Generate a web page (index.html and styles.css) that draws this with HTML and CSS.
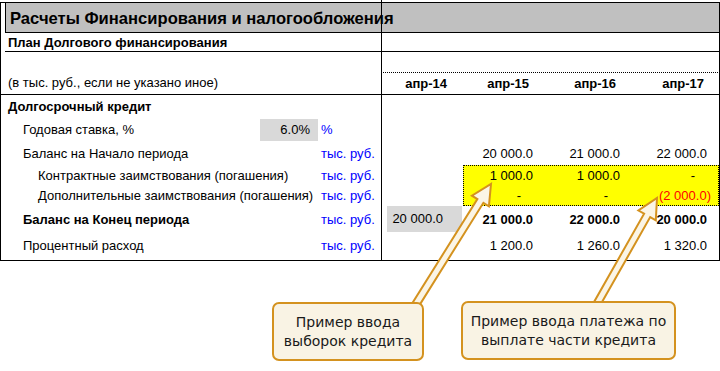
FILE: index.html
```
<!DOCTYPE html>
<html lang="ru">
<head>
<meta charset="utf-8">
<title>Расчеты Финансирования и налогообложения</title>
<link rel="stylesheet" href="styles.css">
</head>
<body>
<div class="sheet">
  <div class="frame">
    <div class="title">Расчеты Финансирования и налогообложения</div>
    <div class="plan">План Долгового финансирования</div>
    <div class="head">
      <div class="note">(в тыс. руб., если не указано иное)</div>
      <div class="gapcol"></div>
      <div class="periods">
        <div class="per per1">апр-14</div>
        <div class="per per2">апр-15</div>
        <div class="per per3">апр-16</div>
        <div class="per per4">апр-17</div>
      </div>
    </div>
    <div class="data">
      <div class="yellow">
        <div class="v">1 000.0</div>
        <div class="v">1 000.0</div>
        <div class="v dash">-</div>
        <div class="v dash">-</div>
        <div class="v dash">-</div>
        <div class="v neg">(2 000.0)</div>
      </div>

      <div class="lbl bold l0">Долгосрочный кредит</div>
      <div></div><div></div><div></div><div></div><div></div><div></div><div></div>

      <div class="lbl l1">Годовая ставка, %</div>
      <div class="input">6.0%</div>
      <div class="unit">%</div>
      <div></div><div></div><div></div><div></div><div></div>

      <div class="lbl l1">Баланс на Начало периода</div>
      <div></div>
      <div class="unit">тыс. руб.</div>
      <div></div><div></div>
      <div class="v">20 000.0</div>
      <div class="v">21 000.0</div>
      <div class="v">22 000.0</div>

      <div class="lbl l2">Контрактные заимствования (погашения)</div>
      <div></div>
      <div class="unit">тыс. руб.</div>
      <div></div><div></div>

      <div class="lbl l2">Дополнительные заимствования (погашения)</div>
      <div></div>
      <div class="unit">тыс. руб.</div>
      <div></div><div></div>

      <div class="lbl bold l1">Баланс на Конец периода</div>
      <div></div>
      <div class="unit">тыс. руб.</div>
      <div></div>
      <div class="start">20 000.0</div>
      <div class="v bold">21 000.0</div>
      <div class="v bold">22 000.0</div>
      <div class="v bold">20 000.0</div>

      <div class="lbl l1">Процентный расход</div>
      <div></div>
      <div class="unit">тыс. руб.</div>
      <div></div><div></div>
      <div class="v">1 200.0</div>
      <div class="v">1 260.0</div>
      <div class="v">1 320.0</div>
    </div>
  </div>

  <div class="freeze"></div>

  <svg class="arrows" width="720" height="371" viewBox="0 0 720 371">
    <polygon points="409.2,321.6 483.4,202.8 488.9,206.3 491,184 471.9,195.7 477.4,199.1 403.2,317.8"/>
    <polygon points="593.5,317.1 650.2,217.1 655.8,220.3 657,198 638.4,210.5 644.1,213.7 587.4,313.7"/>
  </svg>

  <div class="callout call1">Пример ввода<br>выборок кредита</div>
  <div class="callout call2">Пример ввода платежа по<br>выплате части кредита</div>
</div>
</body>
</html>
```

FILE: styles.css
```
* { box-sizing: border-box; }
html, body { margin: 0; padding: 0; background: #fff; }
body {
  font-family: "Liberation Sans", Arial, sans-serif;
  font-size: 13px;
  color: #000;
}
.sheet {
  position: relative;
  width: 720px;
  height: 371px;
  overflow: hidden;
}
.frame {
  margin-top: 2px;
  width: 720px;
  height: 259px;
  border: 1px solid #000;
}
.title {
  margin-left: 4px;
  height: 31px;
  margin-top: -1px;
  border-top: 1px solid #000;
  border-left: 1px solid #000;
  border-bottom: 1px solid #000;
  background: #c0c0c0;
  font-weight: bold;
  font-size: 16.6px;
  line-height: 29px;
  padding-top: 1px;
  padding-left: 4px;
  white-space: nowrap;
}
.plan {
  margin-left: 4px;
  height: 19px;
  border-bottom: 1px solid #000;
  font-weight: bold;
  line-height: 19px;
  padding-left: 3px;
}
.head {
  display: grid;
  grid-template-columns: 380px 1px 337px;
  height: 43px;
  border-bottom: 1px solid #000;
}
.note {
  padding-left: 7px;
  padding-top: 23px;
  line-height: 15px;
  white-space: nowrap;
}
.periods {
  display: grid;
  grid-template-columns: 81px 82px 87px 87px;
  margin-top: 20px;
  border-top: 1px dotted #000;
  margin-left: 1px;
  margin-right: 1px;
}
.per {
  font-weight: bold;
  text-align: right;
  padding-right: 17px;
  line-height: 21px;
}
.per1 { margin-left: -1px; }
.per4 { margin-right: -1px; }

.data {
  display: grid;
  grid-template-columns: 259px 58px 63px 1px 81px 82px 87px 87px;
  grid-template-rows: 23px 23px 24px 20px 21px 26px 27px;
  align-items: center;
}
.data > div { min-width: 0; }
.lbl {
  white-space: nowrap;
  overflow: visible;
}
.l0 { padding-left: 7px; }
.l1 { padding-left: 22px; }
.l2 { padding-left: 37px; }
.bold { font-weight: bold; }
.input {
  align-self: stretch;
  margin-top: 1px;
  background: #d9d9d9;
  text-align: right;
  padding-right: 8px;
  line-height: 22px;
}
.unit {
  color: #0000ff;
  padding-left: 3px;
  white-space: nowrap;
}
.v {
  text-align: right;
  padding-right: 12px;
  white-space: nowrap;
}
.v.dash { padding-right: 24px; }
.v.neg { color: #ff0000; padding-right: 8px; }
.start {
  align-self: stretch;
  margin: 0 1px 0 5px;
  background: #d9d9d9;
  text-align: right;
  padding-right: 19px;
  line-height: 26px;
  white-space: nowrap;
}
.yellow {
  grid-column: 6 / 9;
  grid-row: 4 / 6;
  align-self: stretch;
  background: #ffff00;
  border: 1px dotted #000;
  display: grid;
  grid-template-columns: 81px 87px 86px;
  grid-template-rows: 19px 20px;
  align-items: center;
}
.yellow .v:nth-child(3n) { padding-right: 11px; }
.yellow .v.dash:nth-child(3n) { padding-right: 23px; }
.yellow .v.neg { padding-right: 7px; }

.freeze {
  position: absolute;
  left: 381px;
  top: 0;
  width: 1px;
  height: 261px;
  background: #000;
}
.arrows {
  position: absolute;
  left: 0;
  top: 0;
}
.arrows polygon {
  fill: #fbf5e6;
  stroke: #d4921f;
  stroke-width: 2;
  stroke-linejoin: miter;
}
.callout {
  position: absolute;
  background: #f9f3e4;
  border: 2px solid #d4921f;
  border-radius: 7px;
  font-family: "DejaVu Sans", Verdana, sans-serif;
  font-size: 14px;
  line-height: 19px;
  color: #1a1a1a;
  text-align: center;
  display: flex;
  align-items: center;
  justify-content: center;
  white-space: nowrap;
}
.call1 { left: 272px; top: 302px; width: 152px; height: 59px; }
.call2 { left: 461px; top: 301px; width: 215px; height: 59px; }
```
